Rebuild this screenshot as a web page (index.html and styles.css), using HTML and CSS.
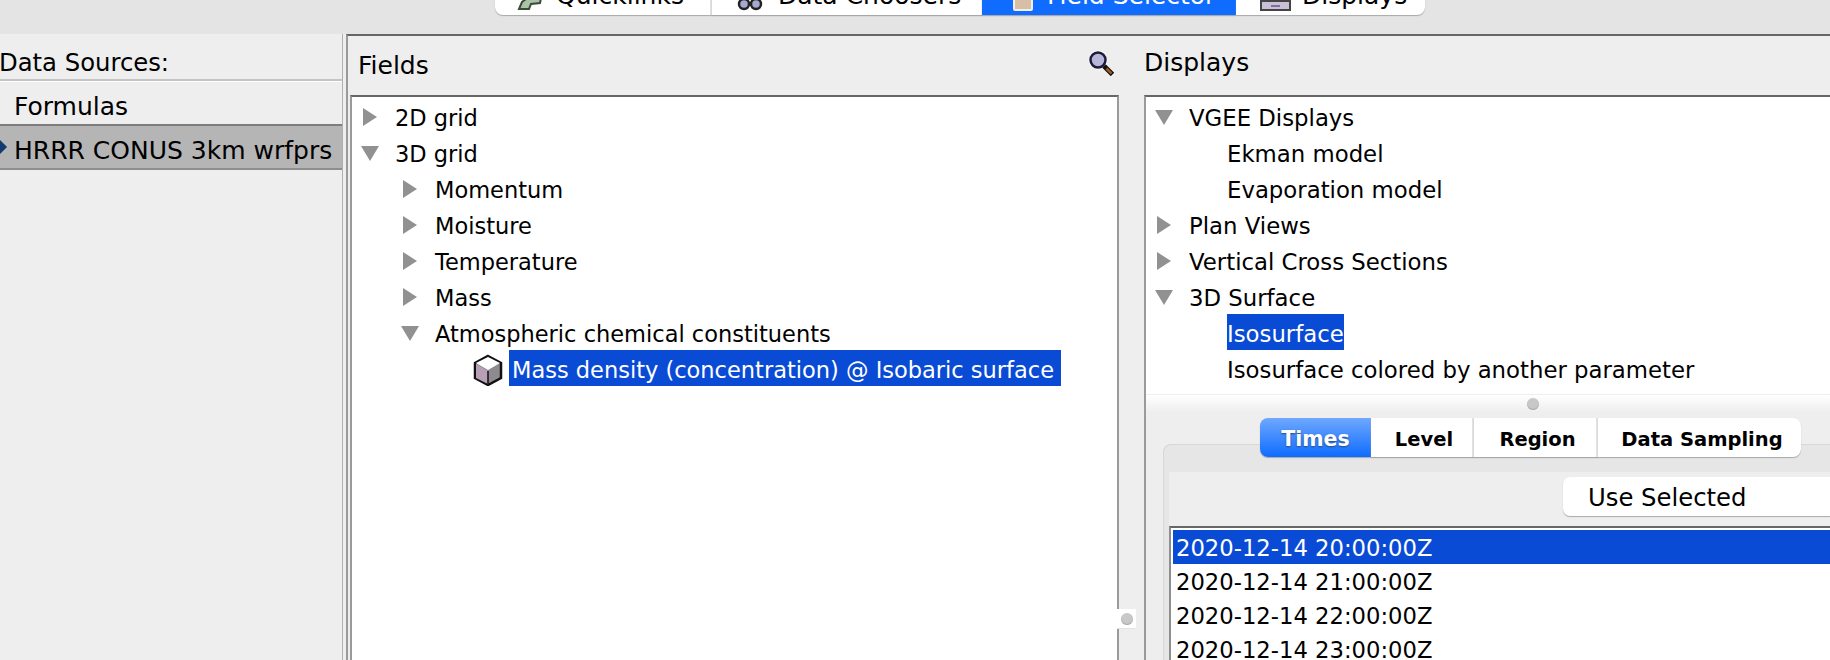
FILE: index.html
```html
<!DOCTYPE html>
<html lang="en">
<head>
  <meta charset="UTF-8" />
  <title>Field Selector</title>
  <link rel="stylesheet" href="styles.css">
</head>
<body>
  <div class="main-tabs">
    <div class="main-tab tab-quick">
      <svg class="tab-icon" width="27" height="30" viewBox="0 0 27 30"><path d="M8 4h14l3 8-2 10-9 1-2 5H2l3-7 4-3z" fill="#a9c4a4" stroke="#3c4a3c" stroke-width="2"/></svg>
      <span>Quicklinks</span>
    </div>
    <div class="main-tab tab-choosers">
      <svg class="tab-icon" width="27" height="30" viewBox="0 0 27 30"><circle cx="7" cy="23" r="5" fill="#a7a7cf" stroke="#222" stroke-width="2.500"/><circle cx="19" cy="23" r="5" fill="#a7a7cf" stroke="#222" stroke-width="2.500"/><path d="M4 6h7v12H4zM15 6h7v12h-7z" fill="#333"/></svg>
      <span>Data Choosers</span>
    </div>
    <div class="main-tab tab-selector active">
      <svg class="tab-icon" width="20" height="30" viewBox="0 0 20 30"><rect x="1" y="0" width="18" height="29" rx="1" fill="#d6bfa6" stroke="#f4eee8" stroke-width="2"/></svg>
      <span>Field Selector</span>
    </div>
    <div class="main-tab tab-displays">
      <svg class="tab-icon" width="31" height="30" viewBox="0 0 31 30"><path d="M5 0h21v19H5z" fill="#e8e4ee" stroke="#444" stroke-width="2"/><path d="M1 20h29v9H1z" fill="#c9bfd6" stroke="#444" stroke-width="2"/><path d="M11 25h9" stroke="#7d70a0" stroke-width="2"/></svg>
      <span>Displays</span>
    </div>
  </div>

  <div class="content">
    <div class="sources">
      <div class="sources-title">Data Sources:</div>
      <div class="sources-list">
        <div class="source-row">Formulas</div>
        <div class="source-row selected"><span class="source-mark"></span>HRRR CONUS 3km wrfprs</div>
      </div>
    </div>

    <div class="workspace">
      <div class="fields-pane">
        <div class="fields-head">
          <span>Fields</span>
          <svg class="search-icon" width="28" height="27" viewBox="0 0 28 27">
            <circle cx="10" cy="10" r="9.500" fill="#fff"/>
            <path d="M16 16l9 9" stroke="#fff" stroke-width="6"/>
            <circle cx="10" cy="10" r="7.500" fill="#b6b6d8" stroke="#1d1a3c" stroke-width="2.500"/>
            <path d="M16 16l8.500 8.500" stroke="#111" stroke-width="5"/>
            <path d="M18.500 18.500l5 5" stroke="#9a5a24" stroke-width="2.500"/>
          </svg>
        </div>
        <div class="tree-box">
          <div class="tree-row"><span class="twist closed"></span>2D grid</div>
          <div class="tree-row"><span class="twist open"></span>3D grid</div>
          <div class="tree-row lvl-1"><span class="twist closed"></span>Momentum</div>
          <div class="tree-row lvl-1"><span class="twist closed"></span>Moisture</div>
          <div class="tree-row lvl-1"><span class="twist closed"></span>Temperature</div>
          <div class="tree-row lvl-1"><span class="twist closed"></span>Mass</div>
          <div class="tree-row lvl-1"><span class="twist open"></span>Atmospheric chemical constituents</div>
          <div class="tree-row lvl-2">
            <svg class="cube-icon" width="30" height="32" viewBox="0 0 30 32">
              <path d="M15 2 28 9v15l-13 7-13-7V9z" fill="#8f8a90" stroke="#111" stroke-width="2.500"/>
              <path d="M15 3 27 9l-12 7L3 9z" fill="#fff"/>
              <path d="M3 10l12 7v13L3 24z" fill="#b79fb6"/>
              <path d="M15 17v14" stroke="#111" stroke-width="1.500"/>
            </svg>
            <span class="tree-label selected">Mass density (concentration) @ Isobaric surface</span>
          </div>
        </div>
      </div>

      <div class="vsplit"><div class="vsplit-grip"><span class="grip-dot"></span></div></div>

      <div class="displays-pane">
        <div class="displays-head">Displays</div>
        <div class="displays-box">
          <div class="displays-tree">
            <div class="tree-row"><span class="twist open"></span>VGEE Displays</div>
            <div class="tree-row leaf">Ekman model</div>
            <div class="tree-row leaf">Evaporation model</div>
            <div class="tree-row"><span class="twist closed"></span>Plan Views</div>
            <div class="tree-row"><span class="twist closed"></span>Vertical Cross Sections</div>
            <div class="tree-row"><span class="twist open"></span>3D Surface</div>
            <div class="tree-row leaf"><span class="tree-label selected">Isosurface</span></div>
            <div class="tree-row leaf">Isosurface colored by another parameter</div>
          </div>
          <div class="hsplit"><span class="grip-dot"></span></div>
          <div class="settings">
            <div class="sub-tabs">
              <div class="sub-tab tab-times active">Times</div>
              <div class="sub-tab tab-level">Level</div>
              <div class="sub-tab tab-region">Region</div>
              <div class="sub-tab tab-sampling">Data Sampling</div>
            </div>
            <div class="tab-panel">
              <div class="panel-inner">
                <div class="combo-row"><div class="combo">Use Selected</div></div>
                <div class="time-list">
                  <div class="time-row selected">2020-12-14 20:00:00Z</div>
                  <div class="time-row">2020-12-14 21:00:00Z</div>
                  <div class="time-row">2020-12-14 22:00:00Z</div>
                  <div class="time-row">2020-12-14 23:00:00Z</div>
                </div>
              </div>
            </div>
          </div>
        </div>
      </div>
    </div>
  </div>
</body>
</html>
```

FILE: styles.css
```css
html, body {
  margin: 0;
  height: 660px;
  overflow: hidden;
}

body {
  width: 1830px;
  background: #eeeeee;
  color: #000;
  font-family: "DejaVu Sans", sans-serif;
  font-size: 25px;
}

/* top tab strip, mostly cut off by the window edge */
.main-tabs {
  display: flex;
  height: 34px;
  padding-left: 495px;
  background: #e4e4e4;
  box-sizing: border-box;
}

.main-tab {
  display: flex;
  align-items: center;
  box-sizing: border-box;
  height: 39px;
  margin-top: -24px;
  background: #fff;
  box-shadow: 0 1px 1px #a8a8a8;
  white-space: nowrap;
  overflow: hidden;
}

.main-tab.active {
  background: linear-gradient(#6ea8ff, #0f6cff 60%);
  color: #fff;
}

.tab-quick {
  width: 217px;
  padding-left: 22px;
  border-right: 2px solid #e2e2e2;
  border-radius: 0 0 0 8px;
}

.tab-quick .tab-icon { margin-right: 12px; }

.tab-choosers {
  width: 270px;
  padding-left: 25px;
}

.tab-choosers .tab-icon { margin-right: 14px; }

.tab-selector {
  width: 254px;
  padding-left: 31px;
}

.tab-selector .tab-icon { margin-right: 14px; }

.tab-displays {
  width: 189px;
  padding-left: 24px;
  border-radius: 0 0 8px 0;
}

.tab-displays .tab-icon { margin-right: 11px; }

.content {
  display: flex;
  height: 626px;
}

/* left list of data sources */
.sources {
  width: 343px;
  flex: none;
  box-sizing: border-box;
  border-right: 1px solid #b0b0b0;
}

.sources-title {
  height: 45px;
  line-height: 58px;
  margin-left: -1px;
  font-size: 24.300px;
}

.sources-list {
  border-top: 2px solid #c4c4c4;
  box-shadow: inset 0 1px 0 #fff;
}

.source-row {
  display: flex;
  align-items: center;
  height: 36px;
  padding: 7px 0 0 14px;
  position: relative;
  white-space: nowrap;
}

.source-row.selected {
  height: 36px;
  padding-top: 6px;
  background: #b5b5b5;
  border-top: 2px solid #7d7d7d;
  border-bottom: 2px solid #8e8e8e;
}

.source-mark {
  position: absolute;
  left: -5px;
  top: 16px;
  width: 10px;
  height: 10px;
  background: #123a6e;
  transform: rotate(45deg);
}

.workspace {
  display: flex;
  flex: 1;
  min-width: 0;
  margin-left: 3px;
  border-top: 2px solid #666;
  border-left: 2px solid #9a9a9a;
}

.fields-pane {
  display: flex;
  flex-direction: column;
  width: 771px;
  flex: none;
  padding-left: 2px;
  box-sizing: border-box;
}

.fields-head {
  display: flex;
  flex: none;
  align-items: center;
  justify-content: space-between;
  height: 59px;
  padding: 0 3px 0 8px;
  line-height: 62px;
}

.search-icon { margin-bottom: 4px; }

.tree-box {
  flex: 1;
  padding-top: 1px;
  background: #fff;
  border: 2px solid #9a9a9a;
  border-top-color: #666;
  border-bottom: 0;
  font-size: 22.5px;
}

.tree-row {
  display: flex;
  align-items: center;
  box-sizing: border-box;
  height: 36px;
  padding: 4px 0 0 9px;
  white-space: nowrap;
}

.tree-row.lvl-1 { padding-left: 49px; }
.tree-row.lvl-2 { padding-left: 121px; }
.tree-row.leaf { padding-left: 81px; }

.twist {
  width: 34px;
  flex: none;
  margin-top: -2px;
}

.twist::before {
  content: "";
  display: block;
  width: 0;
  height: 0;
}

.twist.closed::before {
  margin-left: 2px;
  border-left: 14px solid #919191;
  border-top: 9px solid transparent;
  border-bottom: 9px solid transparent;
}

.twist.open::before {
  border-top: 15px solid #919191;
  border-left: 9px solid transparent;
  border-right: 9px solid transparent;
}

.tree-label.selected {
  display: block;
  height: 36px;
  margin-top: -4px;
  line-height: 40px;
  background: #0a4bd6;
  color: #fff;
}

.lvl-2 .tree-label {
  padding: 0 7px 0 3px;
  margin-left: 6px;
}

.vsplit {
  position: relative;
  width: 25px;
  flex: none;
}

.vsplit-grip {
  position: absolute;
  left: -2px;
  top: 573px;
  display: flex;
  align-items: center;
  justify-content: center;
  width: 19px;
  height: 19px;
  background: #fff;
  border-bottom: 1px solid #e2e2e2;
}

.grip-dot {
  display: block;
  width: 12px;
  height: 12px;
  border-radius: 50%;
  background: #c8c8c8;
  box-shadow: inset 0 -1px 1px #aaa;
}

.displays-pane {
  display: flex;
  flex-direction: column;
  flex: 1;
  min-width: 0;
}

.displays-head {
  flex: none;
  height: 59px;
  line-height: 54px;
}

.displays-box {
  flex: 1;
  min-width: 0;
  border-top: 2px solid #666;
  border-left: 2px solid #9a9a9a;
}

.displays-tree {
  height: 296px;
  padding-top: 1px;
  background: #fff;
  border-bottom: 1px solid #efefef;
  overflow: hidden;
  font-size: 22.8px;
}

.hsplit {
  display: flex;
  align-items: center;
  justify-content: center;
  height: 17px;
  padding-left: 90px;
  background: linear-gradient(#fff, #eee);
}

.settings {
  padding: 6px 0 0 17px;
  background: #eee;
}

.sub-tabs {
  display: flex;
  position: relative;
  margin: 0 0 -13px 97px;
}

.sub-tab {
  display: flex;
  align-items: center;
  justify-content: center;
  box-sizing: border-box;
  height: 39px;
  padding: 3px 0 0 5px;
  background: #fff;
  box-shadow: 0 1px 1px #a8a8a8;
  font-weight: bold;
  font-size: 19.500px;
  border-right: 2px solid #e2e2e2;
}

.sub-tab.active {
  padding-left: 0;
  background: linear-gradient(#6fa8ff, #0f6cff);
  color: #fff;
  font-size: 20.500px;
  text-shadow: 0 1px 2px #274a80;
  border-right: 0;
}

.tab-times { width: 111px; border-radius: 8px 0 0 8px; }
.tab-level { width: 103px; }
.tab-region { width: 124px; }
.tab-sampling { width: 203px; border-right: 0; border-radius: 0 8px 8px 0; }

.tab-panel {
  padding: 27px 0 0 6px;
  background: #e6e6e6;
  border-top: 1px solid #d8d8d8;
  border-radius: 8px 0 0 0;
  box-shadow: inset 1px 0 0 #d8d8d8;
}

.panel-inner {
  background: #eee;
}

.combo-row {
  display: flex;
  height: 54px;
  padding: 5px 0 0 394px;
  box-sizing: border-box;
}

.combo {
  flex: 1;
  height: 39px;
  line-height: 41px;
  padding-left: 25px;
  background: #fff;
  border-radius: 7px 0 0 7px;
  box-shadow: 0 1px 1px #a8a8a8;
  font-size: 24.300px;
}

.time-list {
  padding: 2px 0 0 2px;
  background: #fff;
  border-top: 2px solid #666;
  border-left: 2px solid #8e8e8e;
  font-size: 22.700px;
}

.time-row {
  height: 34px;
  line-height: 36px;
  padding-left: 3px;
}

.time-row.selected {
  background: #0a4bd6;
  color: #fff;
}
```
